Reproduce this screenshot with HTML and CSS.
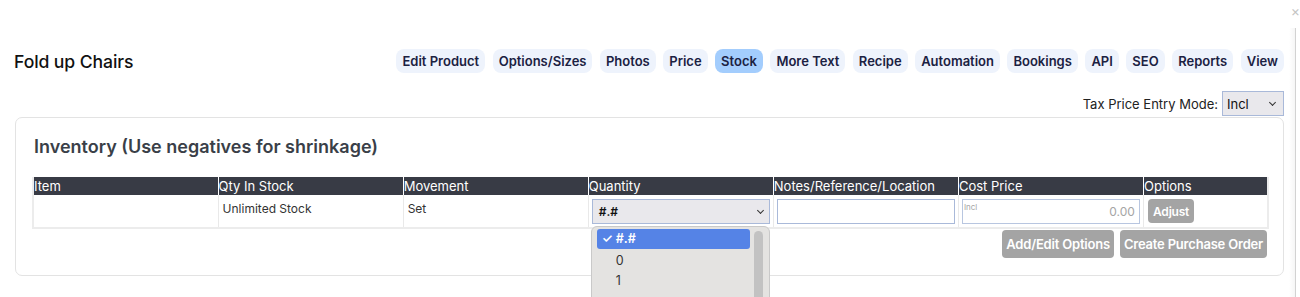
FILE: index.html
```html
<!DOCTYPE html>
<html lang="en">
<head>
  <meta charset="UTF-8">
  <title>Fold up Chairs - Stock</title>
  <link rel="stylesheet" href="styles.css">
</head>
<body>
  <div class="close">&times;</div>
  <div class="page">
    <div class="topbar">
      <h2 class="product-name">Fold up Chairs</h2>
      <nav class="tabs">
        <a class="tab">Edit Product</a>
        <a class="tab">Options/Sizes</a>
        <a class="tab">Photos</a>
        <a class="tab">Price</a>
        <a class="tab active">Stock</a>
        <a class="tab">More Text</a>
        <a class="tab">Recipe</a>
        <a class="tab">Automation</a>
        <a class="tab">Bookings</a>
        <a class="tab">API</a>
        <a class="tab">SEO</a>
        <a class="tab">Reports</a>
        <a class="tab">View</a>
      </nav>
    </div>
    <div class="tax-mode">
      <span>Tax Price Entry Mode:</span>
      <div class="select tax-select">Incl <span class="chev"></span></div>
    </div>
    <div class="card">
      <h3 class="card-title">Inventory (Use negatives for shrinkage)</h3>
      <table class="stock-table">
        <thead>
          <tr>
            <th>Item</th>
            <th>Qty In Stock</th>
            <th>Movement</th>
            <th>Quantity</th>
            <th>Notes/Reference/Location</th>
            <th>Cost Price</th>
            <th class="col-options">Options</th>
          </tr>
        </thead>
        <tbody>
          <tr>
            <td></td>
            <td>Unlimited Stock</td>
            <td>Set</td>
            <td class="qty-cell">
              <div class="select qty-select">#.# <span class="chev"></span></div>
              <div class="dropdown">
                <div class="opt selected"><span class="tick">&#10003;</span>#.#</div>
                <div class="opt">0</div>
                <div class="opt">1</div>
                <div class="scroll"></div>
              </div>
            </td>
            <td><div class="input"></div></td>
            <td><div class="input cost"><span class="cost-tag">Incl</span><span>0.00</span></div></td>
            <td><button class="btn small">Adjust</button></td>
          </tr>
        </tbody>
      </table>
      <div class="actions">
        <button class="btn">Add/Edit Options</button>
        <button class="btn">Create Purchase Order</button>
      </div>
    </div>
  </div>
  <div class="edge"></div>
</body>
</html>
```

FILE: styles.css
```css
body {
  margin: 0;
  font-family: Inter, "Noto Sans", sans-serif;
  color: #111;
  background: #fff;
  height: 297px;
  overflow: hidden;
  position: relative;
}
.page {
  width: 1270px;
  padding: 49px 0 0 14px;
}
.close {
  position: absolute;
  top: 2px;
  right: 0;
  font-size: 14px;
  color: #c4c4c4;
}
.edge {
  position: absolute;
  top: 28px;
  right: 4px;
  width: 6px;
  height: 270px;
  border-right: 1px solid #d2d2d2;
  background: linear-gradient(90deg, rgba(0,0,0,0), rgba(0,0,0,0.04));
}
.topbar {
  display: flex;
  justify-content: space-between;
  align-items: center;
}
.product-name {
  margin: 0;
  font-size: 17.6px;
  font-weight: 500;
  letter-spacing: -0.1px;
}
.tabs {
  display: flex;
  gap: 7.5px;
}
.tab {
  display: block;
  padding: 4px 6px;
  line-height: 16px;
  font-size: 13px;
  font-weight: 600;
  color: #1b2142;
  background: #eef3fc;
  border-radius: 8px;
}
.tab.active {
  background: #a3cdfd;
}
.tax-mode {
  display: flex;
  justify-content: flex-end;
  align-items: center;
  gap: 4px;
  margin-top: 18px;
  font-size: 13px;
  color: #222;
}
.select {
  box-sizing: border-box;
  display: flex;
  justify-content: space-between;
  align-items: center;
  background: #e9e8ec;
  border: 1px solid #a9b9d9;
  font-size: 13px;
  color: #111;
}
.tax-select {
  width: 62px;
  height: 25px;
  padding: 0 8px 0 4px;
}
.chev {
  width: 4px;
  height: 4px;
  border-right: 1.5px solid #333;
  border-bottom: 1.5px solid #333;
  transform: rotate(45deg);
  margin-top: -3px;
}
.card {
  margin: 1px 0 0 1px;
  border: 1px solid #e3e3e3;
  border-radius: 7px;
  padding: 18px 16px 17px 16px;
}
.card-title {
  margin: 0 0 20px 2px;
  font-size: 18px;
  font-weight: 600;
  color: #3a3f48;
}
.stock-table {
  width: 1237px;
  border-collapse: collapse;
  font-size: 13px;
  table-layout: fixed;
  border: 2px solid #ececec;
  border-top: none;
}
.stock-table th {
  background: #383b45;
  color: #fff;
  font-weight: 400;
  text-align: left;
  height: 18px;
  padding: 0;
  line-height: 18px;
  border-left: 1px solid #fff;
}
.stock-table th:first-child { border-left: none; }
.stock-table .col-options { width: 123px; }
.stock-table td {
  height: 33px;
  padding: 4px 3px 0 3px;
  vertical-align: top;
  font-size: 12px;
  color: #333;
  border-left: 1px solid #e9e9e9;
  box-sizing: border-box;
}
.stock-table td:first-child { border-left: none; }
.stock-table td:nth-child(2),
.stock-table td:nth-child(3) {
  padding: 6px 4px 0;
}
.qty-cell { position: relative; }
.qty-select {
  width: 178px;
  height: 25px;
  padding: 0 6px;
  font-size: 12px;
  font-weight: 600;
}
.input {
  box-sizing: border-box;
  width: 178px;
  height: 25px;
  border: 1px solid #a9b9d9;
  background: #fff;
}
.input.cost {
  display: flex;
  justify-content: space-between;
  padding: 0 4px 0 1px;
  font-size: 12px;
  color: #a5a5a5;
  align-items: center;
  border-color: #b8c6e0;
}
.cost-tag {
  font-size: 8px;
  align-self: flex-start;
  margin-top: 2px;
}
.dropdown {
  position: absolute;
  top: 31px;
  left: 2px;
  width: 179px;
  height: 80px;
  box-sizing: border-box;
  background: #e4e3e1;
  border: 1px solid #c9c9c9;
  border-radius: 6px;
  padding: 2px 19px 0 5px;
  font-size: 12.5px;
  color: #333;
}
.opt {
  height: 20px;
  line-height: 20px;
  padding-left: 19px;
}
.opt.selected {
  padding-left: 5px;
  margin-bottom: 2px;
  background: #5583e6;
  color: #fff;
  border-radius: 3px;
  font-weight: 600;
}
.tick {
  display: inline-block;
  width: 14px;
}
.scroll {
  position: absolute;
  top: 4px;
  right: 6px;
  width: 9px;
  height: 80px;
  border-radius: 5px;
  background: #c2c2c2;
}
.btn {
  border: none;
  background: #a4a4a4;
  color: #fff;
  font-family: inherit;
  font-weight: 600;
  font-size: 13px;
  letter-spacing: -0.2px;
  border-radius: 4px;
  padding: 0 4px;
  height: 28px;
}
.btn.small {
  height: 24px;
  font-size: 12px;
  padding: 0 5px;
  margin-left: 1px;
}
.actions {
  display: flex;
  justify-content: flex-end;
  gap: 6px;
  margin-top: 1px;
}
```
